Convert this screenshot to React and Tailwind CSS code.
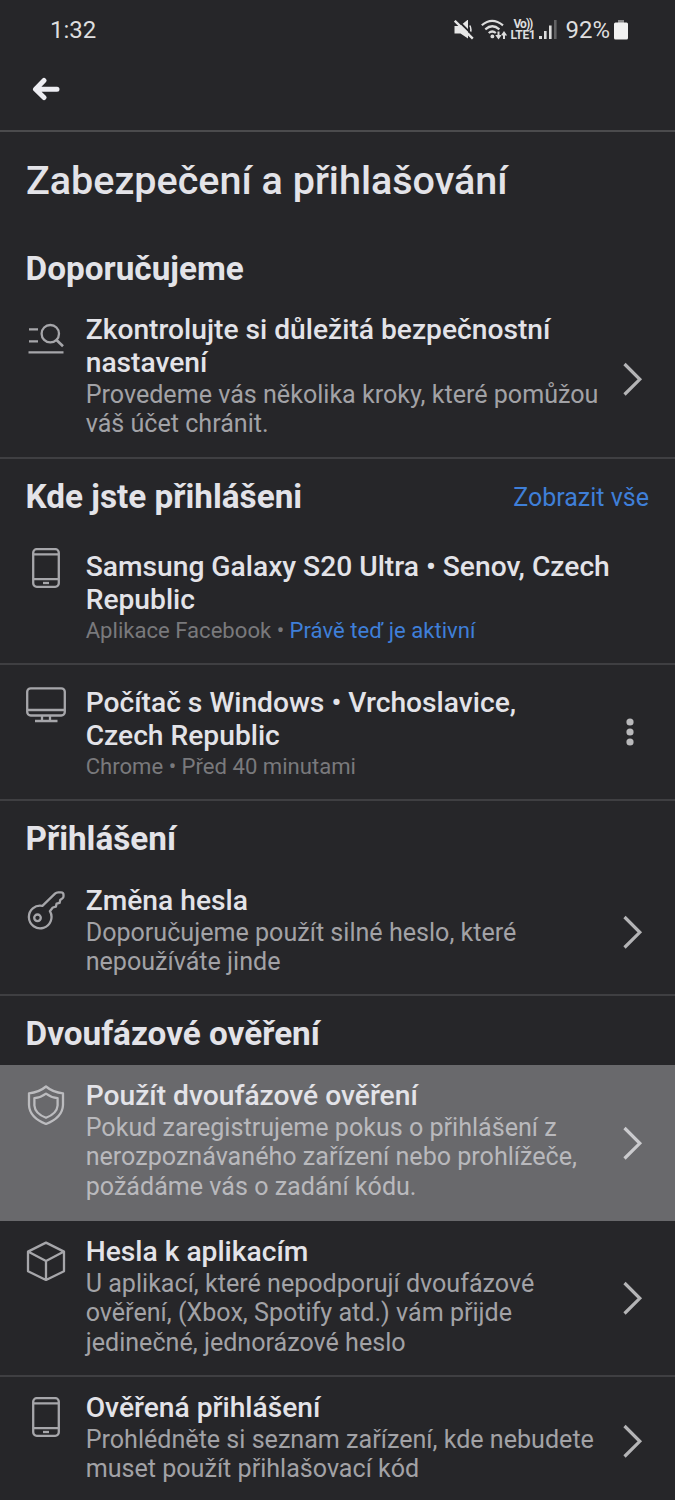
const ICON = "h-10 w-10 shrink-0 fill-none stroke-[#a6a6aa] stroke-[2.3]";

function ReviewIcon() {
  return (
    <svg viewBox="0 0 40 40" className={ICON} strokeLinecap="butt">
      <path d="M3 9.3h9M3 21.3h9M2.5 32.3h35" />
      <circle cx="24.3" cy="13.7" r="8.7" />
      <path d="M30.5 20l6.5 6.3" strokeWidth="2.6" />
    </svg>
  );
}

function PhoneIcon() {
  return (
    <svg viewBox="0 0 40 40" className={ICON}>
      <rect x="7.2" y="1.2" width="25.6" height="37.6" rx="3.5" />
      <path d="M7 6.4h26M7 31.2h26" />
      <path d="M17 35h6" />
    </svg>
  );
}

function MonitorIcon() {
  return (
    <svg viewBox="0 0 40 40" className={ICON}>
      <rect x="1.2" y="3.3" width="37.6" height="27.2" rx="3.5" />
      <path d="M1 25h38M16 31v5M24 31v5M9 36h22.5" />
    </svg>
  );
}

function KeyIcon() {
  return (
    <svg viewBox="0 0 40 40" className={ICON} strokeLinejoin="round">
      <path d="M16.4 15.9L29 3.6Q30.3 2.3 32.2 2.3H35Q37.5 2.3 37.5 4.800V6.200Q37.500 7.600 36.400 8.400L34.200 10L33.600 12.900L30.600 13.600L29.900 16.700L26.800 17.500L23.900 21.200A11.300 11.300 0 1 1 16.400 15.900Z" />
      <circle cx="11.5" cy="27.800" r="3.300" />
    </svg>
  );
}

function ShieldIcon() {
  return (
    <svg viewBox="0 0 40 40" className="h-10 w-10 shrink-0 fill-none stroke-[#bcbcbf] stroke-[2.3]" strokeLinejoin="round">
      <path d="M20 1.5Q27 7.400 37 8.300V20Q36.500 32.500 20 39Q3.500 32.500 3 20V8.300Q13 7.400 20 1.500Z" />
      <path d="M20 8.600Q25 12.400 31.600 13.200V20.500Q31 28.600 20 32.800Q9 28.600 8.400 20.500V13.200Q15 12.400 20 8.600Z" />
    </svg>
  );
}

function CubeIcon() {
  return (
    <svg viewBox="0 0 40 40" className={ICON} strokeLinejoin="round">
      <path d="M20 1.600L38 10.600V30.200L20 39L2 30.200V10.600ZM2 10.600L20 20L38 10.600M20 20V39" />
    </svg>
  );
}

function Chevron({ light }) {
  return (
    <svg viewBox="0 0 20 34" className={`h-[34px] w-5 shrink-0 fill-none ${light ? "stroke-[#cbcbce]" : "stroke-[#b4b4b6]"}`} strokeWidth="3.2">
      <path d="M1.500 2L16.800 17.300L1.500 32.500" />
    </svg>
  );
}

function Dots() {
  return (
    <svg viewBox="0 0 8 28" className="mr-[9px] h-7 w-2 shrink-0 fill-[#b8b8ba]">
      <circle cx="4" cy="4" r="3.600" />
      <circle cx="4" cy="14" r="3.600" />
      <circle cx="4" cy="24" r="3.600" />
    </svg>
  );
}

function StatusBar() {
  return (
    <div className="flex h-[60px] items-center pl-[50px] pr-[47px] text-[24px] leading-[28px] text-[#dededf]">
      <span>1:32</span>
      <div className="ml-auto flex items-center">
        <svg viewBox="0 0 20 20" className="mr-[7px] h-5 w-5 fill-[#e6e6e6]">
          <path d="M0.500 6h5.500L14 -0.500V18.500L6.500 13.500H0.500Z" />
          <path d="M15.800 5.500q2.200 4 0 8" fill="none" stroke="#e6e6e6" strokeWidth="1.500" />
          <path d="M3 -0.500L20 16.400" stroke="#262629" strokeWidth="2" />
          <path d="M0.800 0.800L18.800 18.600" stroke="#e6e6e6" strokeWidth="2.400" />
        </svg>
        <svg viewBox="0 0 26 22" className="h-[22px] w-[26px] fill-none stroke-[#dcdcdc]" strokeWidth="2.200">
          <path d="M0.800 6.300Q11 -2.700 22 6.300M4.300 10.300Q11.300 4.200 18.400 10.300M7.700 14Q11.300 11 14.800 14" />
          <circle cx="11.400" cy="17.400" r="1.900" className="fill-[#dcdcdc] stroke-none" />
          <path d="M17.500 12.500v4M23 20v-4" strokeWidth="2" />
          <path d="M14.300 16h6.400l-3.200 4.500zM19.800 16.500h6.400l-3.200-4.500z" className="fill-[#dcdcdc] stroke-none" />
        </svg>
        <div className="ml-[3px] flex w-[25px] flex-col items-center whitespace-nowrap text-[12px] font-bold leading-[11px]">
          <span className="tracking-[-1px]">Vo))</span>
          <span className="tracking-[-0.300px]">LTE1</span>
        </div>
        <svg viewBox="0 0 18 20" className="ml-1 h-5 w-[18px] fill-[#dcdcdc]">
          <path d="M0 16h3v3H0zM5 11h2.600v8H5zM10 5.500h2.600v13.500H10z" />
          <path d="M15 0h2.600v19H15z" className="fill-[#626264]" />
        </svg>
        <span className="ml-[8px]">92%</span>
        <svg viewBox="0 0 14 21" className="ml-1 h-[21px] w-[14px] fill-[#f2f2f2]">
          <path d="M4 0h6v3H4z" className="fill-[#8a8a8c]" />
          <rect x="0" y="2.500" width="14" height="17" rx="1.500" />
        </svg>
      </div>
    </div>
  );
}

function SectionTitle({ children, action, className }) {
  return (
    <div className={`flex items-start justify-between pl-[25.5px] pr-[26px] ${className}`}>
      <h2 className="whitespace-nowrap text-[33.300px] font-bold leading-[38px]">{children}</h2>
      {action && (
        <a className="mt-[5px] whitespace-nowrap text-[25px] leading-[30px] text-[#3f7fd8]">{action}</a>
      )}
    </div>
  );
}

function Lines({ lines }) {
  return lines.map((line) => (
    <span key={line} className="block whitespace-nowrap">
      {line}
    </span>
  ));
}

function Row({ icon, title, desc, meta, end, highlight, className }) {
  return (
    <div className={`flex items-start pl-[26px] pr-[32px] ${className}`}>
      <div className="pt-5">{icon}</div>
      <div className="ml-[19.700px] min-w-0 flex-1 pt-[14px]">
        <h3 className="text-[28.200px] font-medium leading-[33px]">
          <Lines lines={title} />
        </h3>
        {desc && (
          <p className={`pt-px text-[25.100px] leading-[29.400px] ${highlight ? "text-[#b9b9bd]" : "text-[#a2a2a6]"}`}>
            <Lines lines={desc} />
          </p>
        )}
        {meta && <p className="whitespace-nowrap text-[22.100px] leading-[29px] text-[#79797c]">{meta}</p>}
      </div>
      <div className="flex items-center self-stretch">{end}</div>
    </div>
  );
}

export default function App() {
  return (
    <div className="h-[1500px] w-[675px] overflow-hidden bg-[#262629] font-['Roboto',sans-serif] text-[#e3e3e8]">
      <StatusBar />
      <header className="h-[72px] border-b-2 border-[#4b4b4d] pl-8 pt-[17px]">
        <svg viewBox="0 0 28 24" className="h-6 w-7 fill-none stroke-[#ededf2]" strokeWidth="5" strokeLinecap="round" strokeLinejoin="round">
          <path d="M12 3.500L3.500 12.300L12 20.500M4 12.300H25" />
        </svg>
      </header>

      <section className="h-[327px] border-b-2 border-[#3f3f42]">
        <h1 className="whitespace-nowrap pl-[26px] pt-[26px] text-[39.500px] font-medium leading-[46px]">Zabezpečení a přihlašování</h1>
        <SectionTitle className="mt-[46px] h-[50px]">Doporučujeme</SectionTitle>
        <Row
          className="h-[157px] [&>div:nth-child(2)]:pt-[13px]"
          icon={<ReviewIcon />}
          title={["Zkontrolujte si důležitá bezpečnostní", "nastavení"]}
          desc={["Provedeme vás několika kroky, které pomůžou", "váš účet chránit."]}
          end={<Chevron />}
        />
      </section>

      <section>
        <SectionTitle className="h-[69px] pt-[19px]" action="Zobrazit vše">Kde jste přihlášeni</SectionTitle>
        <Row
          className="h-[137px] border-b-2 border-[#3f3f42] [&>div:nth-child(2)]:pt-[22px]"
          icon={<PhoneIcon />}
          title={["Samsung Galaxy S20 Ultra • Senov, Czech", "Republic"]}
          meta={<>Aplikace Facebook • <span className="text-[#3f7fd8]">Právě teď je aktivní</span></>}
        />
        <Row
          className="h-[136px] border-b-2 border-[#3f3f42] [&>div:nth-child(2)]:pt-[21px]"
          icon={<MonitorIcon />}
          title={["Počítač s Windows • Vrchoslavice,", "Czech Republic"]}
          meta="Chrome • Před 40 minutami"
          end={<Dots />}
        />
      </section>

      <section>
        <SectionTitle className="h-[69px] pt-[19px]">Přihlášení</SectionTitle>
        <Row
          className="h-[126px] border-b-2 border-[#3f3f42]"
          icon={<KeyIcon />}
          title={["Změna hesla"]}
          desc={["Doporučujeme použít silné heslo, které", "nepoužíváte jinde"]}
          end={<Chevron />}
        />
      </section>

      <section>
        <SectionTitle className="h-[69px] pt-[19px]">Dvoufázové ověření</SectionTitle>
        <Row
          className="h-[156px] bg-[#69696c]"
          highlight
          icon={<ShieldIcon />}
          title={["Použít dvoufázové ověření"]}
          desc={["Pokud zaregistrujeme pokus o přihlášení z", "nerozpoznávaného zařízení nebo prohlížeče,", "požádáme vás o zadání kódu."]}
          end={<Chevron light />}
        />
        <Row
          className="h-[156px] border-b-2 border-[#3f3f42]"
          icon={<CubeIcon />}
          title={["Hesla k aplikacím"]}
          desc={["U aplikací, které nepodporují dvoufázové", "ověření, (Xbox, Spotify atd.) vám přijde", "jedinečné, jednorázové heslo"]}
          end={<Chevron />}
        />
        <Row
          className="h-[127px]"
          icon={<PhoneIcon />}
          title={["Ověřená přihlášení"]}
          desc={["Prohlédněte si seznam zařízení, kde nebudete", "muset použít přihlašovací kód"]}
          end={<Chevron />}
        />
      </section>
    </div>
  );
}
